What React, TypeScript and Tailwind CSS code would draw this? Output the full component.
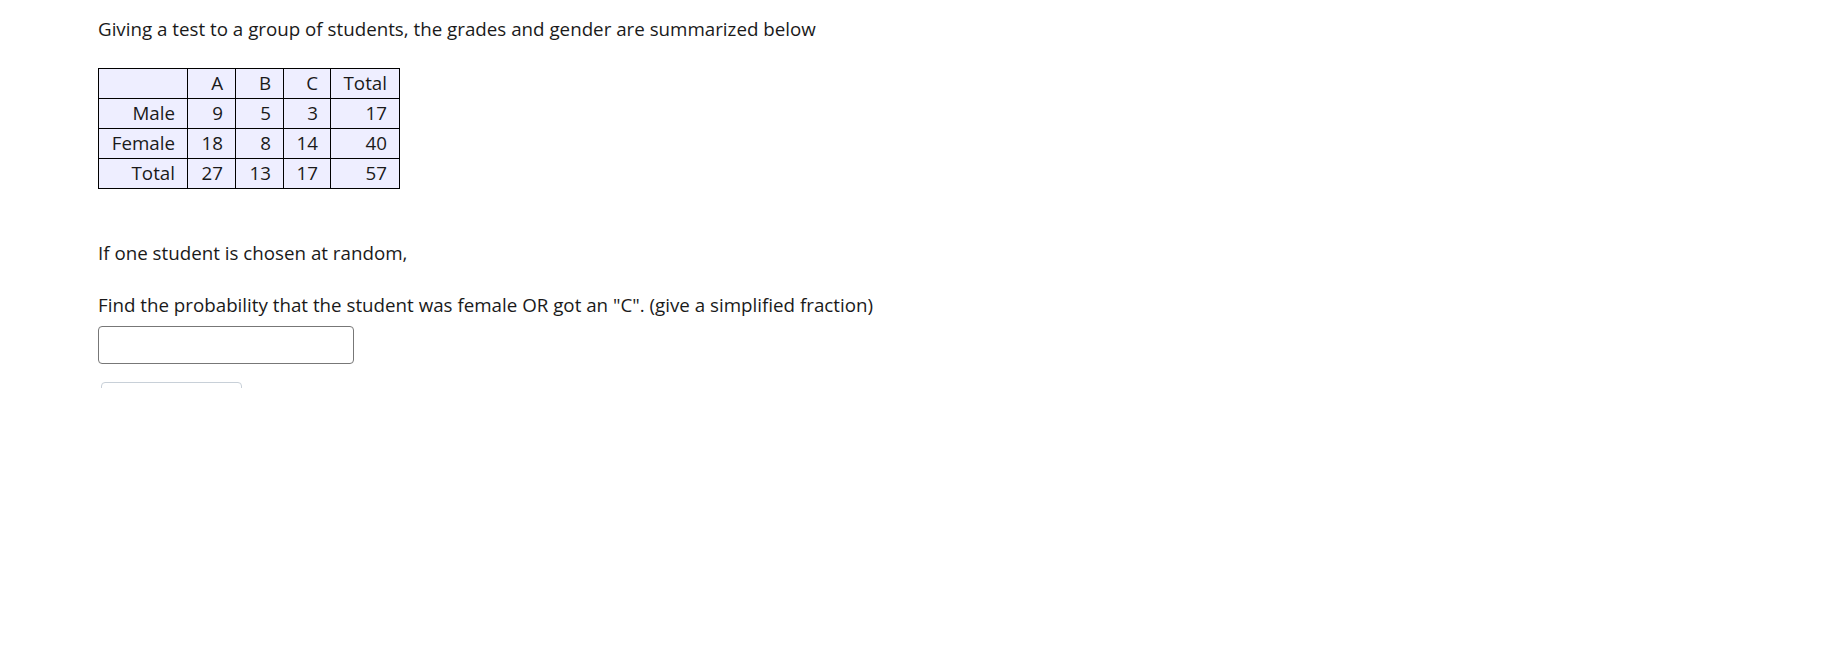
import React from "react";

const rows = [
  ["Male", "9", "5", "3", "17"],
  ["Female", "18", "8", "14", "40"],
  ["Total", "27", "13", "17", "57"],
];

const widths = ["w-[89px]", "w-[48px]", "w-[48px]", "w-[47px]", "w-[69px]"];

export default function App() {
  return (
    <div
      className="w-[1846px] h-[648px] bg-white text-[#1a1a1a] overflow-hidden"
      style={{ fontFamily: '"Open Sans", sans-serif' }}
    >
      <div className="pl-[98px] pt-[15px] h-[388px] overflow-hidden text-[18.75px]">
        <p className="leading-[28px]">
          Giving a test to a group of students, the grades and gender are summarized below
        </p>
        <table className="mt-[25px] border-collapse border border-black table-fixed">
          <tbody>
            <tr className="h-[30px]">
              {["", "A", "B", "C", "Total"].map((h, i) => (
                <td
                  key={i}
                  className={`${widths[i]} border border-black bg-[#eeeeff] text-right pr-[12px] leading-none p-0`}
                >
                  {h}
                </td>
              ))}
            </tr>
            {rows.map((r, ri) => (
              <tr key={ri} className="h-[30px]">
                {r.map((c, i) => (
                  <td
                    key={i}
                    className={`${widths[i]} border border-black bg-[#eeeeff] text-right pr-[12px] leading-none p-0`}
                  >
                    {c}
                  </td>
                ))}
              </tr>
            ))}
          </tbody>
        </table>
        <p className="mt-[50px] leading-[28px]">If one student is chosen at random,</p>
        <p className="mt-[24px] leading-[28px]">
          Find the probability that the student was female OR got an "C". (give a simplified fraction)
        </p>
        <div className="mt-[7px] w-[256px] h-[38px] border border-[#777] rounded-[4px]" />
        <div className="mt-[18px] ml-[3px] w-[141px] h-[30px] border border-[#c8d0d8] rounded-[4px]" />
      </div>
    </div>
  );
}
